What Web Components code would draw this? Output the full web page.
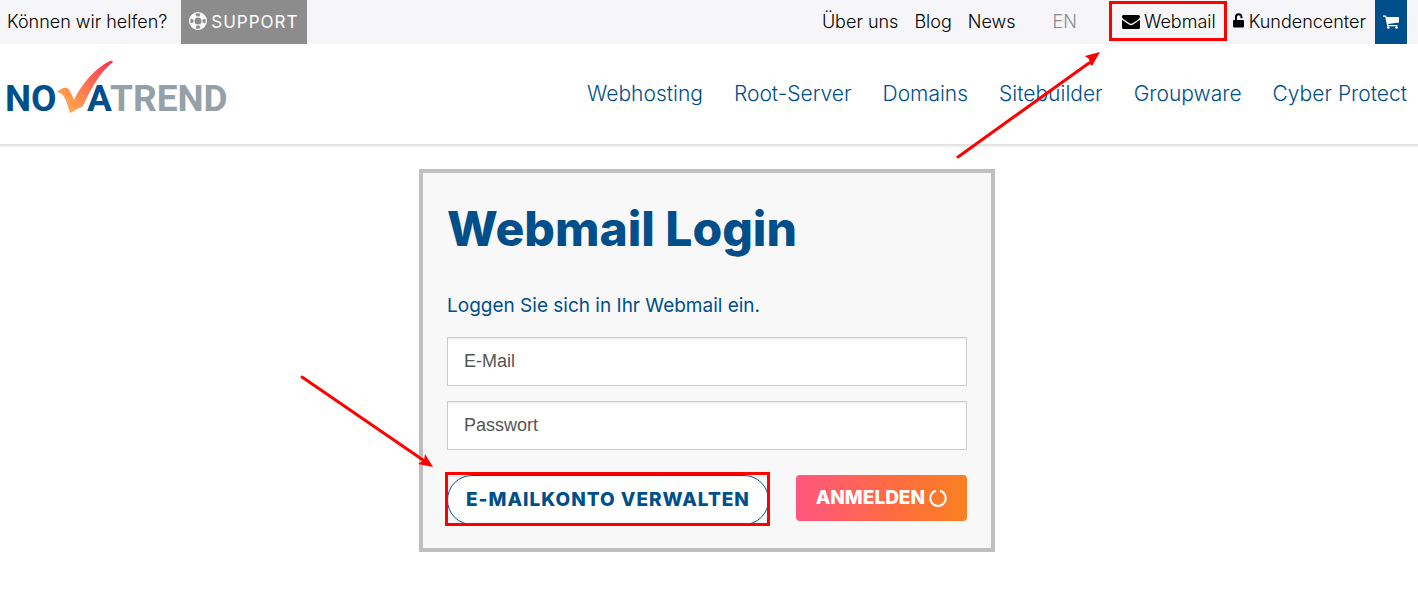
<!DOCTYPE html>
<html lang="de">
<head>
<meta charset="utf-8">
<title>Webmail Login</title>
<style>
  body { margin: 0; background: #fff; color: #111; font-family: Inter, "Open Sans", sans-serif; font-size: 18px; font-weight: 300; line-height: 24px; }
</style>
</head>
<body>
<webmail-page></webmail-page>

<template id="t-icon">
  <style>:host { display: inline-flex; flex: none; } svg { display: block; fill: currentColor; }</style>
</template>

<template id="t-topbar">
  <style>
    :host { display: flex; justify-content: space-between; background: #f6f6f9; padding: 0 11px 0 7px; height: 44px; }
    div { display: flex; align-items: stretch; }
    a, span { display: flex; align-items: center; color: #000; text-decoration: none; box-sizing: border-box; white-space: nowrap; }
    .left { gap: 14px; }
    .support { background: #8c8c8c; color: #fff; padding: 0 8px; gap: 4px; font-size: 17px; font-weight: 400; letter-spacing: 1px; }
    .links { gap: 16px; }
    .lang { color: #8c8c8c; margin: 0 45px 0 37px; }
    .webmail { gap: 4px; position: relative; margin-right: 17px; }
    .webmail::after { content: ""; position: absolute; inset: 1px -11px 3px -13px; border: 3px solid #f00; }
    .center { gap: 4px; }
    .cart { background: #004f8a; color: #fff; width: 32px; justify-content: center; margin-left: 9px; }
  </style>
  <div class="left">
    <span>Können wir helfen?</span>
    <a class="support" href="#support"><ui-icon name="ring"></ui-icon>SUPPORT</a>
  </div>
  <div>
    <div class="links"><a href="#about">Über uns</a><a href="#blog">Blog</a><a href="#news">News</a></div>
    <a class="lang" href="#en">EN</a>
    <a class="webmail" href="#webmail"><ui-icon name="mail"></ui-icon>Webmail</a>
    <a class="center" href="#center"><ui-icon name="lock"></ui-icon>Kundencenter</a>
    <a class="cart" href="#cart" aria-label="Warenkorb"><ui-icon name="cart"></ui-icon></a>
  </div>
</template>

<template id="t-header">
  <style>
    :host { display: flex; justify-content: space-between; position: relative; height: 100px; padding: 0 11px 0 7px; border-bottom: 2px solid #e4e4e4; box-shadow: 0 1px 1px #f4f4f4; }
    .logo { display: block; margin-top: 16px; }
    .logo svg { display: block; overflow: visible; }
    nav { display: flex; gap: 31px; margin-top: 37px; }
    nav a { color: #004f8a; text-decoration: none; font-size: 21px; line-height: 26px; white-space: nowrap; }
    .arrow { position: absolute; top: 8px; right: 316px; }
  </style>
  <a class="logo" href="#home" aria-label="Novatrend">
    <svg width="222" height="54" viewBox="0 0 222 54" font-family="Roboto, sans-serif" font-weight="700" font-size="37">
      <defs><linearGradient id="g" x1="0" y1="1" x2="1" y2="0"><stop offset=".2" stop-color="#ffa04c"/><stop offset="1" stop-color="#fa2f58"/></linearGradient></defs>
      <text x="-2" y="51" fill="#004f8a">NO</text>
      <text x="80" y="51" fill="#004f8a">A</text>
      <text x="103" y="51" fill="#95a1a8">TREND</text>
      <path d="M50 32 Q56 27 60 28 Q62 28 67 40 C74 25 88 8 103 1 Q105 0 106 2 C91 14 83 31 76 46 L63 53 C60 43 58 33 50 32Z" fill="url(#g)"/>
    </svg>
  </a>
  <nav>
    <a href="#hosting">Webhosting</a><a href="#root">Root-Server</a><a href="#domains">Domains</a><a href="#site">Sitebuilder</a><a href="#group">Groupware</a><a href="#cyber">Cyber Protect</a>
  </nav>
  <svg class="arrow" width="146" height="108" aria-hidden="true">
    <path d="M2 105L133 11" stroke="#f00" stroke-width="3" stroke-linecap="round"/><path d="M144 0L129 4L133 7L134 12L136 14Z" fill="#f00"/>
  </svg>
</template>

<template id="t-field">
  <style>
    :host { display: block; }
    input { display: block; box-sizing: border-box; width: 100%; height: 49px; border: 1px solid #ccc; border-radius: 0; background: #fff; box-shadow: inset 0 1px 1px #eee; padding: 0 16px 1px; font: 18px "Liberation Sans", Arial, sans-serif; color: #555; outline: 0; }
    input::placeholder { color: #555; opacity: 1; }
  </style>
  <input>
</template>

<template id="t-login">
  <style>
    :host { display: block; position: relative; box-sizing: border-box; width: 576px; max-width: 100%; border: 4px solid #bfbfbf; background: #f8f8f8; padding: 28px 24px 23px; color: #004f8a; }
    h1 { margin: 0; font-size: 48px; line-height: 56px; font-weight: 800; }
    p { margin: 36px 0 18px; font-size: 19px; line-height: 26px; font-weight: 400; }
    form { display: flex; flex-direction: column; gap: 15px; }
    .actions { display: flex; justify-content: space-between; align-items: flex-start; margin-top: 10px; }
    button { font: 800 19px/24px Inter, sans-serif; white-space: nowrap; cursor: pointer; }
    .marked { position: relative; }
    .marked::after { content: ""; position: absolute; inset: -3px -1px -1px -2px; border: 3px solid #f00; pointer-events: none; }
    .manage { display: block; height: 50px; padding: 0 18px; border: 1px solid #004f8a; border-radius: 25px; background: #fff; color: #004f8a; letter-spacing: 1px; }
    .submit { display: flex; align-items: center; gap: 4px; height: 46px; padding: 0 20px; border: 0; border-radius: 4px; background: linear-gradient(90deg, #ff5680, #ff6d3e 60%, #f98020); color: #fff; }
    .arrow { position: absolute; left: -124px; top: 199px; }
  </style>
  <h1>Webmail Login</h1>
  <p>Loggen Sie sich in Ihr Webmail ein.</p>
  <form>
    <login-field label="E-Mail" type="email"></login-field>
    <login-field label="Passwort" type="password"></login-field>
    <div class="actions">
      <div class="marked"><button class="manage" type="button">E-MAILKONTO VERWALTEN</button></div>
      <button class="submit" type="button">ANMELDEN<ui-icon name="spin"></ui-icon></button>
    </div>
  </form>
  <svg class="arrow" width="138" height="98" aria-hidden="true">
    <path d="M3 5L124 88" stroke="#f00" stroke-width="3" stroke-linecap="round"/><path d="M134 95L126 82L125 88L119 92Z" fill="#f00"/>
  </svg>
</template>

<template id="t-page">
  <style>
    :host { display: block; }
    main { display: flex; justify-content: center; padding: 23px 11px 48px 7px; }
  </style>
  <top-bar></top-bar>
  <site-header></site-header>
  <main><login-card></login-card></main>
</template>

<script>
const ICONS = {
  ring: [18, 20, '<path fill-rule="evenodd" d="M9 0a9 9 0 1 0 0 18A9 9 0 0 0 9 0zM6.4 1.8a7.7 7.7 0 0 1 5.2 0L10.3 4.6a5 5 0 0 0-2.6 0zM1.8 6.4L4.6 7.7a5 5 0 0 0 0 2.6L1.8 11.6a7.7 7.7 0 0 1 0-5.2zM16.2 6.4a7.7 7.7 0 0 1 0 5.2L13.4 10.3a5 5 0 0 0 0-2.6zM6.4 16.2L7.7 13.4a5 5 0 0 0 2.6 0L11.6 16.2a7.7 7.7 0 0 1-5.2 0zM9 5.500a3.500 3.500 0 1 1 0 7 3.500 3.500 0 0 1 0-7z"/>'],
  mail: [18, 14, '<path d="M1.500 0h15A1.500 1.500 0 0 1 18 1.500C18 3 16.500 4.200 15.500 5L11 8Q9 9.500 7 8L2 4.600C1 3.900 0 2.800 0 1.600A1.500 1.500 0 0 1 1.500 0zM0 4.700L6.500 9.200Q9 11.200 11.500 9.200L18 4.700V12.500A1.500 1.500 0 0 1 16.500 14h-15A1.500 1.500 0 0 1 0 12.500z"/>'],
  lock: [12, 18, '<path d="M2 7V4a3.700 3.700 0 0 1 7.400 0v1.300H7.500V4a1.800 1.800 0 0 0-3.600 0v3H10a1 1 0 0 1 1 1v5.500a1 1 0 0 1-1 1H1a1 1 0 0 1-1-1V8a1 1 0 0 1 1-1z"/>'],
  cart: [16, 14, '<path d="M0 .5h3.200l.4 1.500H16v5.500L5.200 8.900l.3 1.200H14.500v1.200H4.200L2.200 1.800H0z"/><circle cx="5.300" cy="12.500" r="1.300"/><circle cx="13.500" cy="12.500" r="1.300"/>'],
  spin: [18, 18, '<path d="M11 1.800a7.700 7.700 0 1 1-4 0" fill="none" stroke="currentColor" stroke-width="2"/>']
};

function build(el, id) {
  const root = el.attachShadow({ mode: 'open' });
  root.append(document.getElementById(id).content.cloneNode(true));
  return root;
}

customElements.define('ui-icon', class extends HTMLElement {
  connectedCallback() {
    if (this.shadowRoot) return;
    const [w, h, body] = ICONS[this.getAttribute('name')];
    build(this, 't-icon').innerHTML += `<svg width="${w}" height="${h}" viewBox="0 0 ${w} ${h}" aria-hidden="true">${body}</svg>`;
  }
});

customElements.define('login-field', class extends HTMLElement {
  connectedCallback() {
    if (this.shadowRoot) return;
    const input = build(this, 't-field').querySelector('input');
    input.type = this.getAttribute('type');
    input.placeholder = this.getAttribute('label');
    input.setAttribute('aria-label', this.getAttribute('label'));
  }
});

for (const [tag, id] of [['top-bar', 't-topbar'], ['site-header', 't-header'], ['login-card', 't-login'], ['webmail-page', 't-page']]) {
  customElements.define(tag, class extends HTMLElement {
    connectedCallback() { if (!this.shadowRoot) build(this, id); }
  });
}
</script>
</body>
</html>
